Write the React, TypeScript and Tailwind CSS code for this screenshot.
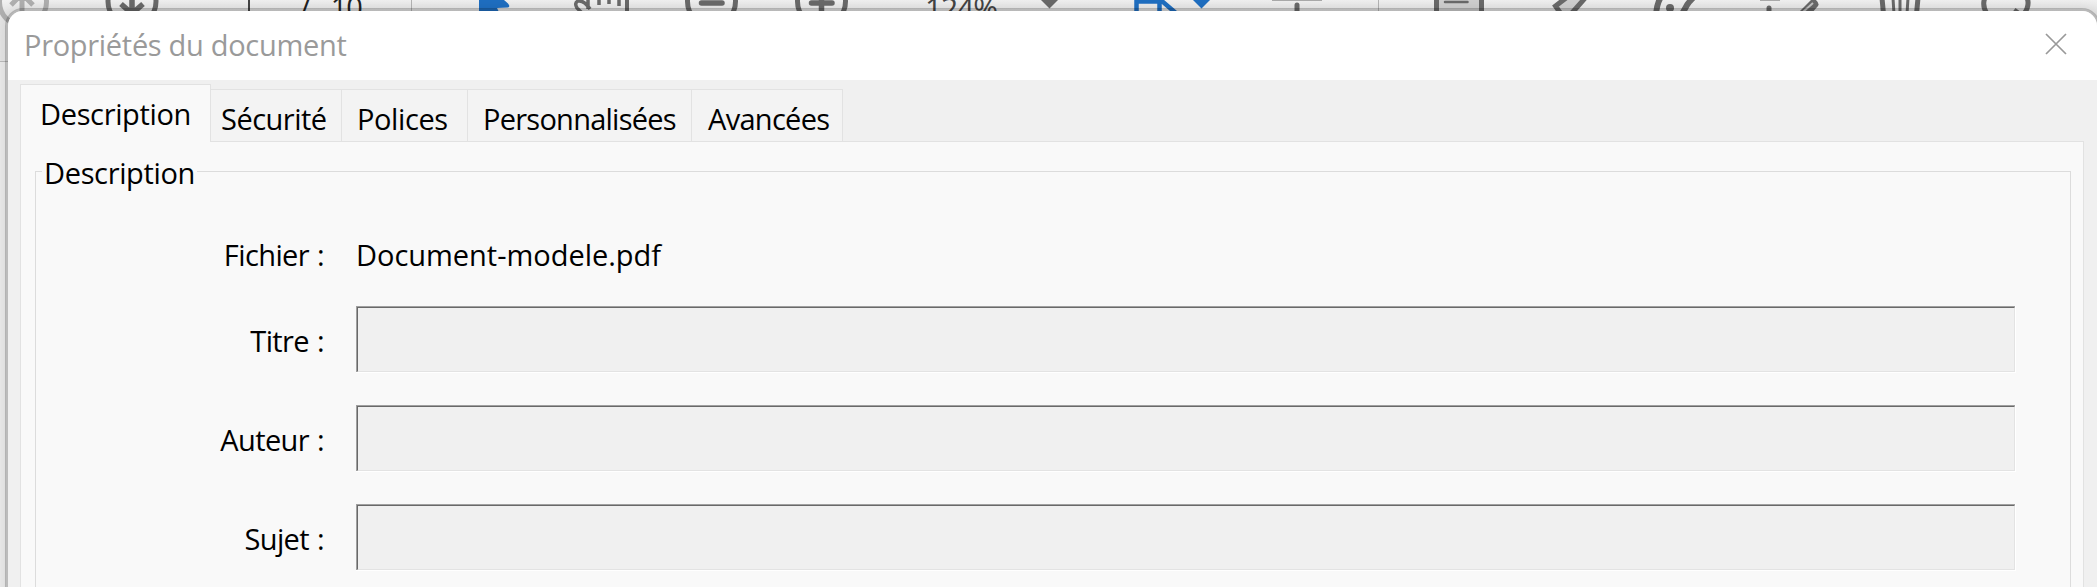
import type { ReactNode } from "react";

const GRAY = "#6a6a6a";
const BLUE = "#1f6fc2";

function Glyph({ box, className, children }: { box: string; className: string; children: ReactNode }) {
  return (
    <svg viewBox={box} className={`h-[30px] shrink-0 ${className}`} fill="none" aria-hidden="true">
      {children}
    </svg>
  );
}

function Toolbar() {
  return (
    <div className="flex h-[62px] items-start overflow-hidden border-b border-[#bcbcbc] bg-linear-to-b from-[#f1f1f1] from-0% to-[#e6e6e6] to-20%">
      <Glyph box="0 0 50 30" className="w-[50px]">
        <circle cx="23" cy="2" r="23.5" stroke="#b0b0b0" strokeWidth="5" />
        <path d="M11 5 22 -6 33 5M22 -6V14" stroke="#b0b0b0" strokeWidth="5" />
      </Glyph>
      <Glyph box="0 0 54 30" className="ml-[55px] w-[54px]">
        <circle cx="27" cy="1.500" r="24" stroke={GRAY} strokeWidth="5" />
        <path d="M16 4 27 13.500 38 4M27 13V-10" stroke={GRAY} strokeWidth="5.500" />
      </Glyph>
      <div className="ml-[89px] h-4 w-[2px] bg-[#444]" />
      <span className="-mt-[11px] ml-[50px] w-[111px] whitespace-pre font-['Open_Sans',sans-serif] text-[29px] leading-[36px] text-[#222]">
        /<span className="ml-[20px] tracking-[-1px]">10</span>
      </span>
      <div className="h-4 w-px bg-[#b4b4b4]" />
      <Glyph box="0 0 32 30" className="ml-[67px] w-8">
        <path d="M0 -20 L25 0 Q33 6 29 7.500 L18 8 L21 14 H0Z" fill={BLUE} />
      </Glyph>
      <Glyph box="0 0 60 30" className="ml-[62px] w-[60px]">
        <path d="M17 9 Q11 0 5 1 Q1 3 4 8 L9 13M15 -4V9" stroke={GRAY} strokeWidth="3.500" />
        <path d="M26 0V5M36 0V4M46 0V6" stroke={GRAY} strokeWidth="3.500" />
        <path d="M54 0V12" stroke={GRAY} strokeWidth="4" />
      </Glyph>
      <Glyph box="0 0 54 30" className="ml-[52px] w-[54px]">
        <circle cx="26.500" cy="1.500" r="24" stroke={GRAY} strokeWidth="5" />
        <path d="M16.500 3H37" stroke={GRAY} strokeWidth="5.500" strokeLinecap="round" />
      </Glyph>
      <Glyph box="0 0 54 30" className="ml-[56px] w-[54px]">
        <circle cx="26.500" cy="1.500" r="24" stroke={GRAY} strokeWidth="5" />
        <path d="M16.500 3H37M26.500 -7V13" stroke={GRAY} strokeWidth="5.500" strokeLinecap="round" />
      </Glyph>
      <span className="-mt-[10px] ml-[76px] w-[73px] shrink-0 font-['Open_Sans',sans-serif] text-[30px] leading-[36px] tracking-[-1.100px] text-[#444]">
        124%
      </span>
      <Glyph box="0 0 20 30" className="ml-[43px] w-5">
        <path d="M0 0H17L8.500 8.500Z" fill={GRAY} />
      </Glyph>
      <Glyph box="0 0 46 30" className="ml-[73px] w-[46px]">
        <path d="M2.500 20V1.500H25.500V20M22 -4 43 14" stroke={BLUE} strokeWidth="4.500" />
      </Glyph>
      <Glyph box="0 0 20 30" className="ml-[13px] w-5">
        <path d="M0 0H17L8.500 8.500Z" fill={BLUE} />
      </Glyph>
      <Glyph box="0 0 50 30" className="ml-[59px] w-[50px]">
        <path d="M0 .5H50" stroke="#aaa" />
        <path d="M25 5V20" stroke={GRAY} strokeWidth="5" strokeLinecap="round" />
      </Glyph>
      <div className="ml-[56px] h-4 w-px bg-[#b4b4b4]" />
      <Glyph box="0 0 50 30" className="ml-[55px] w-[50px]">
        <path d="M2.500 -5H47.500V20H2.500Z" fill="#d0d0d0" stroke={GRAY} strokeWidth="5" />
        <path d="M11 2H33.500" stroke={GRAY} strokeWidth="2.500" strokeLinecap="round" />
      </Glyph>
      <Glyph box="0 0 36 30" className="ml-[68px] w-9">
        <path d="M14 -2 4 5V8L9 14H18L33 -2Z" fill="#d0d0d0" />
        <path d="M14 -2 3.500 6 9 14M34 -3 19 14" stroke={GRAY} strokeWidth="5" />
      </Glyph>
      <Glyph box="0 0 44 30" className="ml-[65px] w-[44px]">
        <path d="M8 -3Q4 3 3 14M40 -2Q36 2 34 5L29 14" stroke={GRAY} strokeWidth="6" />
        <circle cx="17" cy="8" r="4" fill={GRAY} />
      </Glyph>
      <Glyph box="0 0 60 30" className="ml-[63px] w-[60px]">
        <path d="M0 .5H20" stroke="#aaa" />
        <path d="M9 8V20" stroke={GRAY} strokeWidth="5" strokeLinecap="round" />
        <path d="M53 -2Q60 2 58 6L51 14H37L53 -2Z" fill={GRAY} />
        <path d="M43 12 53 3" stroke="#c4c4c4" strokeWidth="2" />
      </Glyph>
      <Glyph box="0 0 44 30" className="ml-[59px] w-[44px]">
        <path d="M3 -2 4.500 14M39 -2 37.500 14" stroke={GRAY} strokeWidth="5" />
        <path d="M14 -2 15 14M21 -2V14M29 -2 28 14" stroke={GRAY} strokeWidth="3" />
      </Glyph>
      <Glyph box="0 0 52 30" className="ml-[58px] w-[52px]">
        <path d="M5 -4Q0 4 6 14M45 -4Q50 4 43 14M33 10 37 13" stroke={GRAY} strokeWidth="5" />
      </Glyph>
    </div>
  );
}

function Tab({ children, className }: { children: ReactNode; className: string }) {
  return (
    <button
      type="button"
      className={`h-[53px] border-y border-r border-[#e2e2e2] bg-[#f3f3f3] pt-[7px] text-left leading-[40px] ${className}`}
    >
      {children}
    </button>
  );
}

function Field({ label }: { label: string }) {
  return (
    <label className="flex h-[99px] items-start">
      <span className="w-[288px] shrink-0 pt-[15px] text-right leading-[40px] tracking-[-0.6px] [word-spacing:1px]">{label}</span>
      <span className="ml-[32px] block h-[67px] w-[1660px] border-r border-b border-white">
        <span className="block h-[66px] border-t border-l border-[#a0a0a0]">
          <input
            readOnly
            className="block h-[65px] w-full border border-t-[#696969] border-r-[#e3e3e3] border-b-[#e3e3e3] border-l-[#696969] bg-[#f0f0f0] outline-none"
          />
        </span>
      </span>
    </label>
  );
}

export default function App() {
  return (
    <div className="relative h-[587px] w-[2097px] overflow-hidden bg-[#ececec] font-['Open_Sans','Noto_Sans',sans-serif] text-[29px] text-black">
      <Toolbar />
      <section className="absolute top-[8px] left-[5px] h-[620px] w-[2095px] overflow-hidden rounded-t-[18px] border-[3px] border-black/20 bg-[#f0f0f0] bg-clip-padding shadow-[0_0_14px_rgba(0,0,0,0.1)]">
        <header className="flex h-[69px] items-start justify-between bg-white pr-[30px] pl-[16px]">
          <h1 className="pt-[14px] leading-[40px] tracking-[-0.3px] text-[#9a9a9a]">Propriétés du document</h1>
          <svg viewBox="0 0 22 22" className="mt-[22px] h-[22px] w-[22px]" fill="none" aria-label="Fermer">
            <path d="M1 1 21 21M21 1 1 21" stroke="#999" strokeWidth="1.700" />
          </svg>
        </header>
        <div className="pt-[4px] pl-[12px]">
          <div className="relative z-10 flex items-end">
            <button
              type="button"
              className="h-[58px] w-[191px] border-x border-t border-[#e2e2e2] bg-[#f9f9f9] pl-[19px] text-left leading-[40px] tracking-[-0.35px]"
            >
              Description
            </button>
            <Tab className="w-[131px] pl-[10px] tracking-[-0.5px]">Sécurité</Tab>
            <Tab className="w-[126px] pl-[15px] tracking-[-0.4px]">Polices</Tab>
            <Tab className="w-[224px] pl-[15px] tracking-[-0.75px]">Personnalisées</Tab>
            <Tab className="w-[151px] pl-[16px] tracking-[-0.7px]">Avancées</Tab>
          </div>
          <div className="-mt-px h-[500px] w-[2064px] border border-[#e2e2e2] bg-[#f9f9f9] pt-[11px] pl-[14px]">
            <fieldset className="-mt-px h-[460px] w-[2036px] border border-[#dcdcdc]">
              <legend className="ml-[6px] h-[38px] pr-[2px] pl-[2px] leading-[42px] tracking-[-0.35px]">Description</legend>
              <div className="flex h-[116px] pt-[45px] leading-[40px]">
                <span className="w-[288px] text-right tracking-[-0.6px] [word-spacing:1px]">Fichier :</span>
                <span className="ml-[32px] tracking-[-0.03px]">Document-modele.pdf</span>
              </div>
              <Field label="Titre :" />
              <Field label="Auteur :" />
              <Field label="Sujet :" />
            </fieldset>
          </div>
        </div>
      </section>
    </div>
  );
}
